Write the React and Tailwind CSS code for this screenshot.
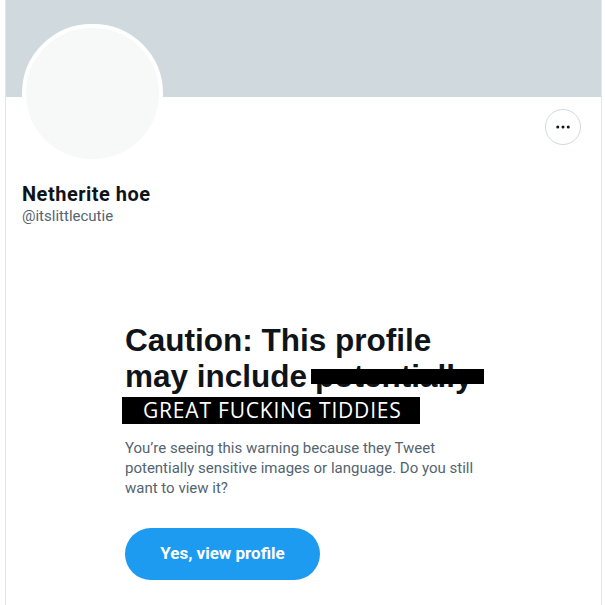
import React from 'react';

const sans = { fontFamily: 'Roboto, "Liberation Sans", Arial, sans-serif' };

const MoreButton = () => (
  <button className="w-[36px] h-[36px] rounded-full border border-[#cfd9de] flex items-center justify-center bg-white">
    <svg width="18" height="18" viewBox="0 0 24 24" fill="#0f1419">
      <circle cx="5" cy="12" r="2" />
      <circle cx="12" cy="12" r="2" />
      <circle cx="19" cy="12" r="2" />
    </svg>
  </button>
);

export default function App() {
  return (
    <div className="w-[605px] h-[605px] bg-white overflow-hidden" style={sans}>
      <div className="ml-[5px] w-[597px] h-full border-x border-[#e1e8ed]">
        {/* Banner */}
        <div className="h-[97px] bg-[#cfd9de]" />

        {/* Profile header */}
        <div className="px-[16px]">
          <div className="flex items-start justify-between">
            <div className="-mt-[73px] w-[141px] h-[139px] rounded-full bg-[#f7f9f9] border-[4px] border-white" />
            <div className="mt-[12px] mr-[4px]">
              <MoreButton />
            </div>
          </div>
          <div className="mt-[19px]">
            <div className="text-[20px] leading-[24px] font-bold text-[#0f1419] tracking-[0.5px]">Netherite hoe</div>
            <div className="text-[15px] leading-[20px] text-[#536471]">@itslittlecutie</div>
          </div>
        </div>

        {/* Caution */}
        <div className="mt-[96px] ml-[119px] w-[356px]">
          <div
            className="text-[31.5px] leading-[36px] font-bold text-[#0f1419]"
            style={{ fontFamily: '"Liberation Sans", Arial, sans-serif' }}
          >
            <div>Caution: This profile</div>
            <div className="flex items-baseline">
              <span>may include</span>
              <span className="relative ml-[8px]">
                potentially
                <span className="absolute left-[-4px] right-[-11px] top-[11px] h-[15px] bg-black" />
              </span>
            </div>
          </div>
          <div
            className="mt-[3px] -ml-[3px] w-[298px] h-[27px] bg-black text-white text-[21px] leading-[27px] pl-[21px] tracking-[0.8px]"
            style={{ fontFamily: '"Open Sans", "Noto Sans", sans-serif' }}
          >
            GREAT FUCKING TIDDIES
          </div>
          <p className="mt-[14px] text-[15px] leading-[20px] text-[#536471]">
            You’re seeing this warning because they Tweet potentially sensitive images or language. Do you still want to view it?
          </p>
          <button className="mt-[30px] w-[195px] h-[52px] rounded-full bg-[#1d9bf0] text-white text-[17px] font-bold">
            Yes, view profile
          </button>
        </div>
      </div>
    </div>
  );
}
